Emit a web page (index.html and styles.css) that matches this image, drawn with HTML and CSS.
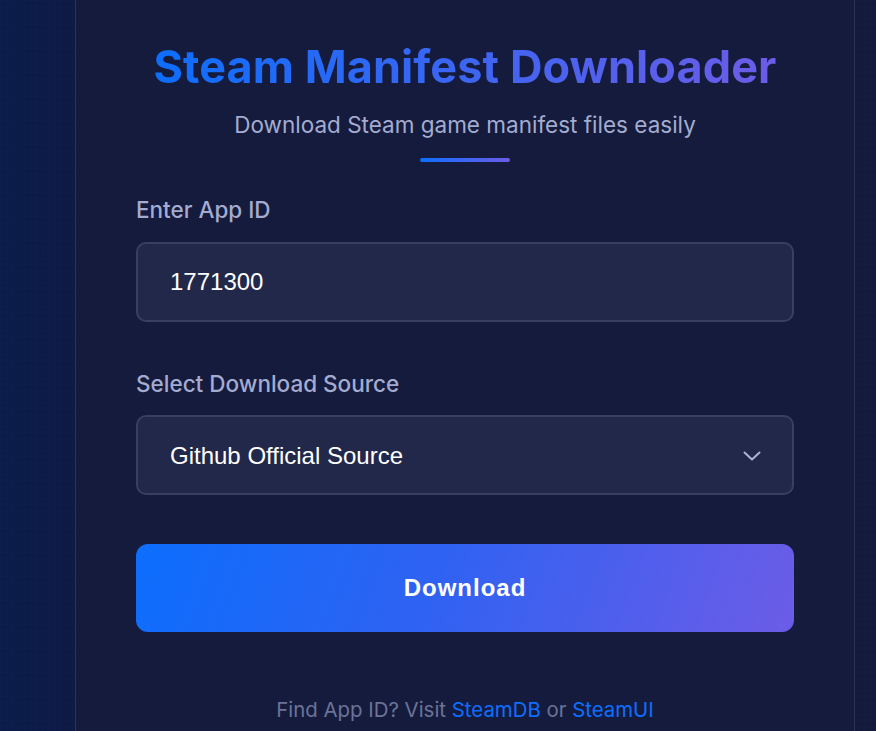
FILE: index.html
```html
<!DOCTYPE html>
<html lang="en">
<head>
<meta charset="utf-8">
<title>Steam Manifest Downloader</title>
<link rel="stylesheet" href="styles.css">
</head>
<body>
<div class="page">
  <main class="card">
    <h1 class="title">Steam Manifest Downloader</h1>
    <p class="subtitle">Download Steam game manifest files easily</p>
    <div class="divider"></div>
    <div class="field">
      <label class="label" for="appid">Enter App ID</label>
      <input class="control" id="appid" type="text" value="1771300">
    </div>
    <div class="field">
      <label class="label" for="source">Select Download Source</label>
      <div class="select-wrap">
        <select class="control select" id="source">
          <option>Github Official Source</option>
        </select>
        <svg class="chevron" width="18" height="10" viewBox="0 0 18 10"><path d="M1.5 1.5 L9 8.5 L16.5 1.5" fill="none" stroke="#a9b4d8" stroke-width="2" stroke-linecap="round" stroke-linejoin="round"/></svg>
      </div>
    </div>
    <button class="btn" type="button">Download</button>
    <p class="hint">Find App ID? Visit <a href="#">SteamDB</a> or <a href="#">SteamUI</a></p>
  </main>
</div>
</body>
</html>
```
FILE: styles.css
```css
* { box-sizing: border-box; }
html, body { margin: 0; height: 100%; }
body {
  background: linear-gradient(90deg, #0b1c4c 0%, #0c1a45 8%, #131a3c 100%);
  font-family: "Inter", "Noto Sans", sans-serif;
  overflow: hidden;
}
.page {
  display: flex;
  justify-content: center;
  padding-left: 75px;
  padding-right: 21px;
  background-image:
    linear-gradient(rgba(255,255,255,0.006) 1px, transparent 1px),
    linear-gradient(90deg, rgba(255,255,255,0.006) 1px, transparent 1px);
  background-size: 6px 6px;
  min-height: 100%;
}
.card {
  width: 780px;
  margin-top: -60px;
  padding: 98px 60px 40px;
  background: #151b3d;
  border: 1px solid #2c3354;
  border-radius: 20px;
  display: flex;
  flex-direction: column;
}
.title {
  margin: 0;
  text-align: center;
  font-size: 45px;
  font-weight: 700;
  line-height: 56px;
  letter-spacing: 0.1px;
  background: linear-gradient(90deg, #0d6efd 0%, #6c5ce7 100%);
  -webkit-background-clip: text;
  background-clip: text;
  color: transparent;
  align-self: center;
}
.subtitle {
  margin: 15px 0 0;
  text-align: center;
  font-size: 22.5px;
  line-height: 30px;
  color: #a3acd0;
}
.divider {
  width: 90px;
  height: 4px;
  border-radius: 2px;
  margin: 18px auto 0;
  background: linear-gradient(90deg, #0d6efd, #6c5ce7);
}
.field {
  display: flex;
  flex-direction: column;
  margin-top: 33px;
}
.field + .field { margin-top: 47px; }
.label {
  font-size: 22.5px;
  line-height: 30px;
  font-weight: 500;
  color: #a3acd0;
  margin-bottom: 17px;
}
.field + .field .label { margin-bottom: 16px; }
.control {
  width: 100%;
  height: 80px;
  background: #22284a;
  border: 2px solid #383f60;
  border-radius: 10px;
  padding: 0 32px;
  font-family: "Liberation Sans", Arial, sans-serif;
  font-size: 24px;
  color: #ffffff;
  outline: none;
}
.select-wrap { position: relative; }
.select {
  appearance: none;
  -webkit-appearance: none;
  display: block;
}
.chevron {
  position: absolute;
  right: 33px;
  top: 36px;
  pointer-events: none;
}
.btn {
  margin-top: 49px;
  height: 88px;
  border: none;
  border-radius: 12px;
  background: linear-gradient(110deg, #0d6efd 0%, #2f62f2 45%, #6c5ce7 100%);
  color: #ffffff;
  font-family: "Liberation Sans", Arial, sans-serif;
  font-size: 24px;
  font-weight: 700;
  letter-spacing: 1px;
  cursor: pointer;
}
.hint {
  margin: 64px 0 0;
  text-align: center;
  font-size: 20.4px;
  line-height: 28px;
  color: #6b7399;
}
.hint a {
  color: #0d6efd;
  text-decoration: none;
}
```
